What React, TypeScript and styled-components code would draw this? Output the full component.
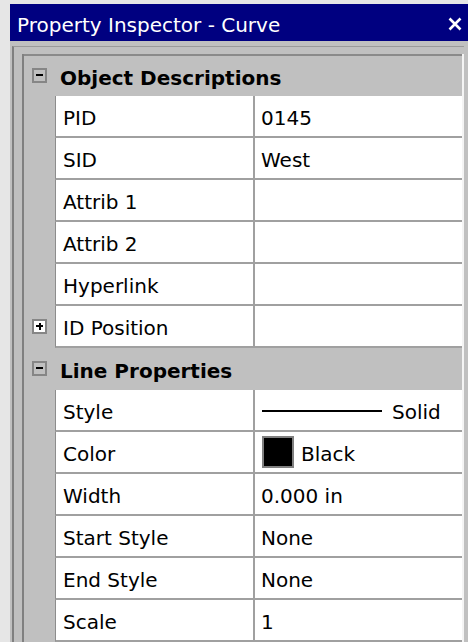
import React from "react";
import styled, { createGlobalStyle } from "styled-components";

const GlobalStyle = createGlobalStyle`
  html, body {
    margin: 0;
    padding: 0;
    background: #e6e6e6;
    overflow: hidden;
  }
  body {
    font-family: "DejaVu Sans", "Liberation Sans", sans-serif;
    font-size: 20px;
    color: #000;
  }
`;

const Window = styled.div`
  margin: 4px 0 0 10px;
  height: calc(100vh - 4px);
  background: #c0c0c0;
  display: flex;
  flex-direction: column;
  overflow: hidden;
`;

const TitleBar = styled.div`
  flex: none;
  height: 37px;
  background: #000080;
  display: flex;
  align-items: center;
  justify-content: space-between;
  padding: 0 6px 0 7px;
`;

const Title = styled.span`
  color: #fff;
  font-size: 20px;
  padding-top: 4px;
  white-space: nowrap;
`;

const GridFrame = styled.div`
  margin: 5px 4px 0 2px;
  border-left: 2px solid #808080;
  border-top: 1px solid #9a9a9a;
  padding: 7px 0 0 8px;
  flex: 1;
  display: flex;
  flex-direction: column;
`;

const Grid = styled.div`
  border-left: 2px solid #808080;
  border-right: 2px solid #f4f4f4;
  flex: 1;
  display: flex;
  flex-direction: column;
`;

const RowBase = styled.div`
  flex: none;
  height: 42px;
  box-sizing: border-box;
  display: grid;
  grid-template-columns: 31px 200px 1fr;
`;

const CategoryRowBox = styled(RowBase)`
  background: #c0c0c0;

  &:first-child {
    border-top: 2px solid #8a8a8a;
  }
`;

const Gutter = styled.div`
  background: #c0c0c0;
  display: flex;
  align-items: center;
  justify-content: center;
`;

const CategoryLabel = styled.div`
  grid-column: 2 / span 2;
  font-weight: bold;
  display: flex;
  align-items: center;
  padding: 3px 0 0 5px;
`;

const Cell = styled.div`
  background: #fff;
  border-bottom: 2px solid #a0a0a0;
  display: flex;
  align-items: center;
  white-space: nowrap;
  overflow: hidden;
`;

const NameCell = styled(Cell)`
  border-left: 1px solid #8c8c8c;
  border-right: 2px solid #a0a0a0;
  padding: 4px 0 0 7px;
`;

const ValueCell = styled(Cell)`
  padding: 4px 0 0 6px;
`;

const ToggleBox = styled.span<{ $open: boolean }>`
  flex: none;
  width: 15px;
  height: 15px;
  box-sizing: border-box;
  border: 2px solid #868686;
  background: ${(p) => (p.$open ? "#c0c0c0" : "#ffffff")};
  position: relative;
  margin-top: -2px;

  &::before {
    content: "";
    position: absolute;
    left: 2px;
    right: 2px;
    top: 4.5px;
    height: 2px;
    background: #000;
  }

  &::after {
    content: "";
    display: ${(p) => (p.$open ? "none" : "block")};
    position: absolute;
    top: 2px;
    bottom: 2px;
    left: 4.5px;
    width: 2px;
    background: #000;
  }
`;

const LineSample = styled.span`
  width: 120px;
  height: 2px;
  background: #000;
  margin: -3px 10px 0 1px;
`;

const ColorSwatch = styled.span<{ $color: string }>`
  width: 32px;
  height: 32px;
  box-sizing: border-box;
  border: 2px solid #808080;
  background: ${(p) => p.$color};
  margin: -4px 7px 0 1px;
`;

const CloseIcon = () => (
  <svg width="14" height="14" viewBox="0 0 14 14" style={{ marginTop: 2 }}>
    <path d="M1.5 1.5 L12.5 12.5 M12.5 1.5 L1.5 12.5" stroke="#fff" strokeWidth="2.6" />
  </svg>
);

type CategoryProps = { label: string };

const CategoryRow = ({ label }: CategoryProps) => (
  <CategoryRowBox>
    <Gutter>
      <ToggleBox $open />
    </Gutter>
    <CategoryLabel>{label}</CategoryLabel>
  </CategoryRowBox>
);

type PropertyProps = {
  name: string;
  value?: React.ReactNode;
  collapsed?: boolean;
};

const PropertyRow = ({ name, value, collapsed }: PropertyProps) => (
  <RowBase>
    <Gutter>{collapsed && <ToggleBox $open={false} />}</Gutter>
    <NameCell>{name}</NameCell>
    <ValueCell>{value}</ValueCell>
  </RowBase>
);

export default function App() {
  return (
    <>
      <GlobalStyle />
      <Window>
        <TitleBar>
          <Title>Property Inspector - Curve</Title>
          <CloseIcon />
        </TitleBar>
        <GridFrame>
          <Grid>
            <CategoryRow label="Object Descriptions" />
            <PropertyRow name="PID" value="0145" />
            <PropertyRow name="SID" value="West" />
            <PropertyRow name="Attrib 1" />
            <PropertyRow name="Attrib 2" />
            <PropertyRow name="Hyperlink" />
            <PropertyRow name="ID Position" collapsed />
            <CategoryRow label="Line Properties" />
            <PropertyRow
              name="Style"
              value={
                <>
                  <LineSample />
                  Solid
                </>
              }
            />
            <PropertyRow
              name="Color"
              value={
                <>
                  <ColorSwatch $color="#000" />
                  Black
                </>
              }
            />
            <PropertyRow name="Width" value="0.000 in" />
            <PropertyRow name="Start Style" value="None" />
            <PropertyRow name="End Style" value="None" />
            <PropertyRow name="Scale" value="1" />
          </Grid>
        </GridFrame>
      </Window>
    </>
  );
}
